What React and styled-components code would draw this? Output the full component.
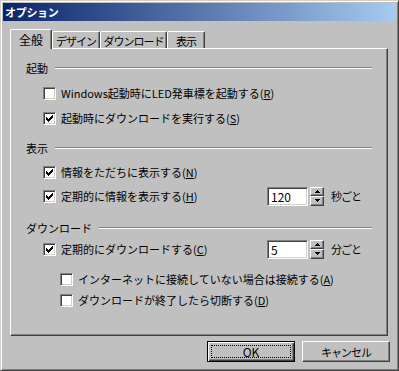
import styled, { createGlobalStyle } from "styled-components";

const Global = createGlobalStyle`
  html, body {
    margin: 0;
    padding: 0;
    background: #c0c0c0;
  }
  body {
    font-family: "Noto Sans CJK JP", "DejaVu Sans", sans-serif;
    font-size: 11px;
    color: #000;
  }
`;

const Window = styled.div`
  width: 399px;
  height: 371px;
  box-sizing: border-box;
  background: #c0c0c0;
  border: 1px solid;
  border-color: #d4d0c8 #404040 #404040 #d4d0c8;
  box-shadow: inset 1px 1px #fff, inset -1px -1px #808080;
  padding: 2px;
  display: flex;
  flex-direction: column;
`;

const TitleBar = styled.div`
  height: 18px;
  display: flex;
  align-items: center;
  padding-left: 2px;
  background: linear-gradient(to right, #0a246a, #a6caf0);
  color: #fff;
  font-weight: bold;
  font-size: 11px;
  letter-spacing: -0.3px;
`;

const Body = styled.div`
  display: flex;
  flex-direction: column;
  padding: 8px 6px 0 7px;
`;

const TabStrip = styled.div`
  display: flex;
  align-items: flex-end;
  height: 19px;
  position: relative;
  z-index: 1;
`;

const Tab = styled.div`
  box-sizing: border-box;
  width: ${(p) => p.$w}px;
  height: ${(p) => (p.$active ? 20 : 17)}px;
  margin-bottom: ${(p) => (p.$active ? -1 : 0)}px;
  display: flex;
  align-items: center;
  justify-content: center;
  white-space: nowrap;
  background: #c0c0c0;
  border-top: 1px solid #fff;
  border-left: 1px solid #fff;
  border-right: 1px solid #404040;
  box-shadow: inset -1px 0 #808080;
  border-radius: 2px 2px 0 0;
  font-size: ${(p) => (p.$active ? 12 : 11)}px;
  letter-spacing: ${(p) => (p.$active ? 0 : -1)}px;
  padding-top: ${(p) => (p.$active ? 0 : 1)}px;
`;

const Panel = styled.div`
  box-sizing: border-box;
  width: 378px;
  height: 288px;
  border: 1px solid;
  border-color: #fff #404040 #404040 #fff;
  box-shadow: inset -1px -1px #808080;
  padding: 12px 15px 0 15px;
  display: flex;
  flex-direction: column;
`;

const Heading = styled.div`
  height: 14px;
  display: flex;
  align-items: center;
  gap: 7px;
  margin-top: ${(p) => p.$top || 0}px;

  span {
    white-space: nowrap;
    line-height: 14px;
  }

  &::after {
    content: "";
    flex: 1;
    height: 0;
    border-top: 1px solid #808080;
    border-bottom: 1px solid #fff;
  }
`;

const Row = styled.div`
  height: 20px;
  display: flex;
  align-items: center;
  margin-top: ${(p) => p.$top}px;
  margin-left: ${(p) => p.$indent}px;
`;

const Box = styled.span`
  box-sizing: border-box;
  width: 13px;
  height: 13px;
  flex: none;
  background: #fff;
  border: 1px solid;
  border-color: #808080 #fff #fff #808080;
  box-shadow: inset 1px 1px #404040, inset -1px -1px #d4d0c8;
  display: flex;
  align-items: center;
  justify-content: center;
`;

const Label = styled.span`
  margin-left: 5px;
  white-space: nowrap;
  width: ${(p) => (p.$w ? `${p.$w}px` : "auto")};
  flex: none;
  line-height: 14px;

  u {
    text-decoration: underline;
  }
`;

const SpinInput = styled.div`
  box-sizing: border-box;
  width: 41px;
  height: 19px;
  background: #fff;
  border: 1px solid;
  border-color: #808080 #fff #fff #808080;
  box-shadow: inset 1px 1px #404040, inset -1px -1px #d4d0c8;
  padding-left: 3px;
  display: flex;
  align-items: center;
  font-size: 12px;
`;

const SpinButtons = styled.div`
  margin-left: 2px;
  display: flex;
  flex-direction: column;
  width: 14px;
  height: 19px;
`;

const SpinBtn = styled.div`
  box-sizing: border-box;
  flex: 1;
  background: #c0c0c0;
  border: 1px solid;
  border-color: #fff #404040 #404040 #fff;
  box-shadow: inset -1px -1px #808080;
  display: flex;
  align-items: center;
  justify-content: center;
`;

const Unit = styled.span`
  margin-left: 7px;
  white-space: nowrap;
  letter-spacing: -1px;
`;

const Buttons = styled.div`
  display: flex;
  justify-content: flex-end;
  gap: 7px;
  margin-top: 5px;
`;

const Button = styled.div`
  box-sizing: border-box;
  width: 88px;
  height: 21px;
  background: #c0c0c0;
  display: flex;
  align-items: center;
  justify-content: center;
  font-size: ${(p) => (p.$default ? 12 : 11)}px;
  letter-spacing: ${(p) => (p.$default ? 0 : -1)}px;
  border: 1px solid;
  border-color: ${(p) =>
    p.$default ? "#000" : "#fff #404040 #404040 #fff"};
  box-shadow: ${(p) =>
    p.$default
      ? "inset 1px 1px #fff, inset -1px -1px #404040, inset -2px -2px #808080"
      : "inset -1px -1px #808080"};
  position: relative;

  ${(p) =>
    p.$default &&
    `
    &::after {
      content: "";
      position: absolute;
      left: 3px; top: 3px; right: 3px; bottom: 3px;
      border: 1px dotted #000;
    }
  `}
`;

function Check({ on }) {
  return (
    <Box>
      {on && (
        <svg width="7" height="7" viewBox="0 0 7 7" shapeRendering="crispEdges">
          <path
            d="M0 2h1v3h-1z M1 3h1v3h-1z M2 4h1v3h-1z M3 3h1v3h-1z M4 2h1v3h-1z M5 1h1v3h-1z M6 0h1v3h-1z"
            fill="#000"
          />
        </svg>
      )}
    </Box>
  );
}

function Spinner({ value }) {
  return (
    <>
      <SpinInput>{value}</SpinInput>
      <SpinButtons>
        <SpinBtn>
          <svg width="5" height="3" viewBox="0 0 5 3" shapeRendering="crispEdges">
            <path d="M2 0h1v1h-1z M1 1h3v1h-3z M0 2h5v1h-5z" fill="#000" />
          </svg>
        </SpinBtn>
        <SpinBtn>
          <svg width="5" height="3" viewBox="0 0 5 3" shapeRendering="crispEdges">
            <path d="M0 0h5v1h-5z M1 1h3v1h-3z M2 2h1v1h-1z" fill="#000" />
          </svg>
        </SpinBtn>
      </SpinButtons>
    </>
  );
}

export default function App() {
  return (
    <>
      <Global />
      <Window>
        <TitleBar>オプション</TitleBar>
        <Body>
          <TabStrip>
            <Tab $w={42} $active>全般</Tab>
            <Tab $w={48}>デザイン</Tab>
            <Tab $w={67}>ダウンロード</Tab>
            <Tab $w={38}>表示</Tab>
          </TabStrip>
          <Panel>
            <Heading>
              <span>起動</span>
            </Heading>
            <Row $top={8} $indent={17}>
              <Check />
              <Label>
                Windows起動時にLED発車標を起動する(<u>R</u>)
              </Label>
            </Row>
            <Row $top={5} $indent={17}>
              <Check on />
              <Label>
                起動時にダウンロードを実行する(<u>S</u>)
              </Label>
            </Row>

            <Heading $top={13}>
              <span>表示</span>
            </Heading>
            <Row $top={7} $indent={17}>
              <Check on />
              <Label>
                情報をただちに表示する(<u>N</u>)
              </Label>
            </Row>
            <Row $top={4} $indent={17}>
              <Check on />
              <Label $w={206}>
                定期的に情報を表示する(<u>H</u>)
              </Label>
              <Spinner value="120" />
              <Unit>秒ごと</Unit>
            </Row>

            <Heading $top={15}>
              <span>ダウンロード</span>
            </Heading>
            <Row $top={4} $indent={17}>
              <Check on />
              <Label $w={206}>
                定期的にダウンロードする(<u>C</u>)
              </Label>
              <Spinner value="5" />
              <Unit>分ごと</Unit>
            </Row>
            <Row $top={10} $indent={34}>
              <Check />
              <Label>
                インターネットに接続していない場合は接続する(<u>A</u>)
              </Label>
            </Row>
            <Row $top={1} $indent={34}>
              <Check />
              <Label>
                ダウンロードが終了したら切断する(<u>D</u>)
              </Label>
            </Row>
          </Panel>
          <Buttons>
            <Button $default>OK</Button>
            <Button>キャンセル</Button>
          </Buttons>
        </Body>
      </Window>
    </>
  );
}
